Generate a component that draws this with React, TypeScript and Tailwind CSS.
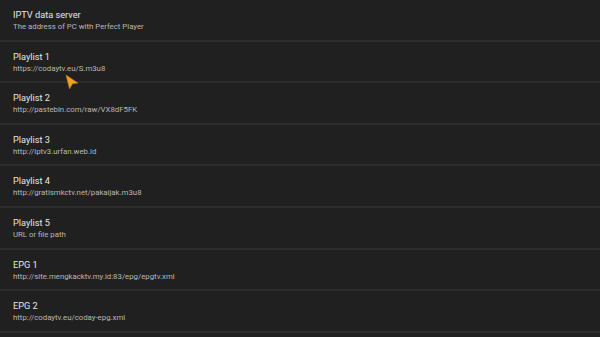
import React from 'react';

const items = [
  { title: 'IPTV data server', sub: 'The address of PC with Perfect Player' },
  { title: 'Playlist 1', sub: 'https://codaytv.eu/S.m3u8' },
  { title: 'Playlist 2', sub: 'http://pastebin.com/raw/VX8dF5FK' },
  { title: 'Playlist 3', sub: 'http://iptv3.urfan.web.id' },
  { title: 'Playlist 4', sub: 'http://gratismkctv.net/pakaijak.m3u8' },
  { title: 'Playlist 5', sub: 'URL or file path' },
  { title: 'EPG 1', sub: 'http://site.mengkacktv.my.id:83/epg/epgtv.xml' },
  { title: 'EPG 2', sub: 'http://codaytv.eu/coday-epg.xml' },
];

const App: React.FC = () => {
  return (
    <div className="relative w-[600px] h-[337px] overflow-hidden bg-[#202020]" style={{ fontFamily: 'Roboto, "Liberation Sans", sans-serif' }}>
      {items.map((item) => (
        <div key={item.title} className="h-[41.6px] border-b-2 border-[#2c2c2c] pl-[13px] pt-[9px]">
          <div className="text-[9.2px] leading-[12px] text-[#e6e6e6]">{item.title}</div>
          <div className="mt-[1px] text-[7.8px] leading-[10px] text-[#b8b8b8]">{item.sub}</div>
        </div>
      ))}

      {/* mouse pointer */}
      <svg className="absolute left-[65px] top-[74px]" width="14" height="16" viewBox="0 0 14 16">
        <path d="M1 1 L13 9 L7.5 9.8 L4.5 15 Z" fill="#f0a020" stroke="#c07010" strokeWidth="0.6" />
      </svg>
    </div>
  );
};

export default App;
